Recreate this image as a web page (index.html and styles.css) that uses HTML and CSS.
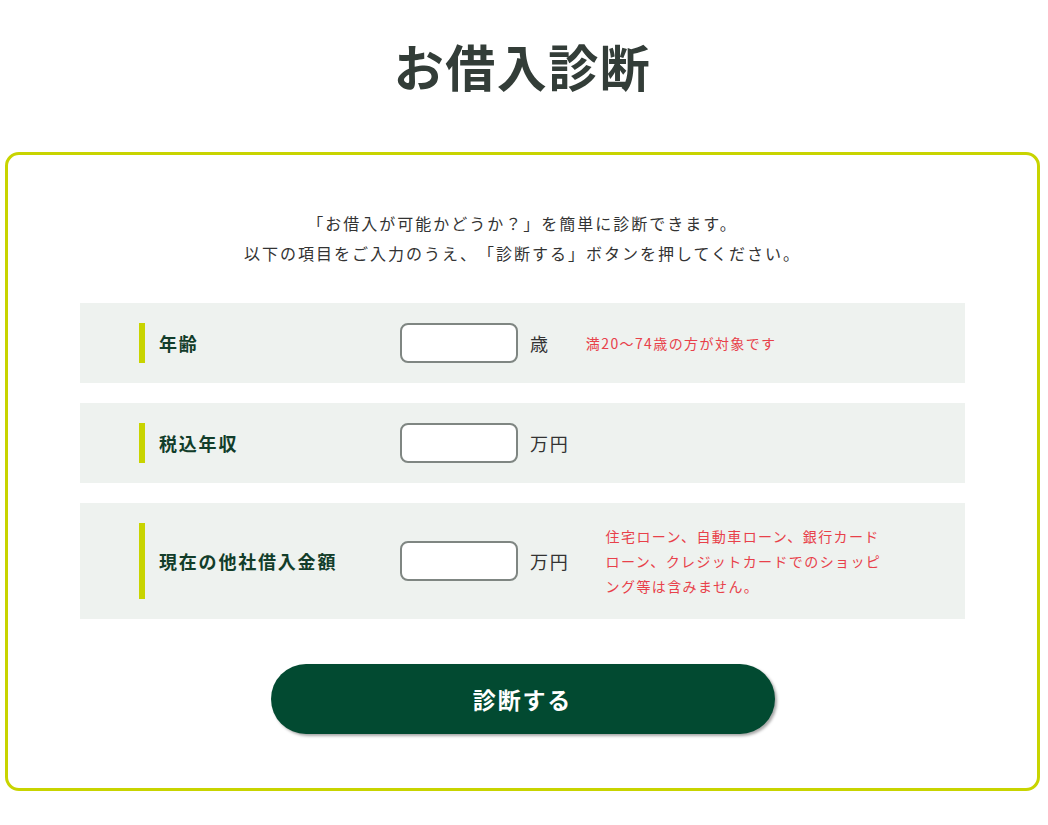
FILE: index.html
```html
<!DOCTYPE html>
<html lang="ja">
<head>
  <meta charset="UTF-8" />
  <meta name="viewport" content="width=device-width, initial-scale=1.0">
  <title>お借入診断</title>
  <link rel="stylesheet" href="styles.css">
</head>
<body>
  <h1 class="title">お借入診断</h1>
  <div class="card">
    <p class="intro">「お借入が可能かどうか？」を簡単に診断できます。<br>以下の項目をご入力のうえ、「診断する」ボタンを押してください。</p>

    <div class="row">
      <div class="label">年齢</div>
      <input type="text" class="field">
      <span class="unit">歳</span>
      <span class="note">満20〜74歳の方が対象です</span>
    </div>

    <div class="row">
      <div class="label">税込年収</div>
      <input type="text" class="field">
      <span class="unit">万円</span>
    </div>

    <div class="row">
      <div class="label">現在の他社借入金額</div>
      <input type="text" class="field">
      <span class="unit">万円</span>
      <span class="note note-wide">住宅ローン、自動車ローン、銀行カードローン、クレジットカードでのショッピング等は含みません。</span>
    </div>

    <div class="actions">
      <button class="submit">診断する</button>
    </div>
  </div>
</body>
</html>
```

FILE: styles.css
```css
body {
  font-family: "Noto Sans CJK JP", "Noto Sans", sans-serif;
  background: #fff;
  color: #333;
  margin: 0;
  padding: 0 8px 0 5px;
  text-spacing-trim: space-all;
}
.title {
  font-size: 50px;
  font-weight: bold;
  color: #333d38;
  text-align: center;
  letter-spacing: 0.03em;
  margin: 0;
  padding-top: 33px;
  line-height: 64px;
  height: 119px;
}
.card {
  border: 3px solid #c8d400;
  border-radius: 14px;
  padding: 53px 72px 54px;
}
.intro {
  text-align: center;
  font-size: 16px;
  line-height: 30px;
  letter-spacing: 0.125em;
  margin: 0 0 35px;
}
.row {
  display: flex;
  align-items: center;
  background: #eef2ef;
  padding: 20px 0 20px 59px;
  margin-bottom: 20px;
}
.label {
  align-self: stretch;
  display: flex;
  align-items: center;
  width: 241px;
  border-left: 6px solid #c8d400;
  padding-left: 14px;
  font-size: 18px;
  font-weight: bold;
  letter-spacing: 0.1em;
  color: #123d2a;
  min-height: 40px;
}
.field {
  box-sizing: border-box;
  width: 118px;
  height: 40px;
  border: 2px solid #7f8682;
  border-radius: 8px;
  background: #fff;
  margin: 0;
}
.unit {
  font-size: 18px;
  letter-spacing: 0.1em;
  margin-left: 12px;
}
.note {
  color: #e8414a;
  font-size: 14px;
  letter-spacing: 0.1em;
  line-height: 25px;
  margin-left: 36px;
}
.note-wide {
  width: 285px;
  padding: 1px 0 0;
}
.actions {
  display: flex;
  justify-content: center;
  padding-top: 25px;
}
.submit {
  width: 504px;
  height: 70px;
  border: none;
  border-radius: 35px;
  background: #024a31;
  color: #fff;
  font-family: inherit;
  font-size: 23px;
  font-weight: bold;
  letter-spacing: 0.08em;
  box-shadow: 2px 2px 3px rgba(0, 0, 0, 0.35);
  cursor: pointer;
}
```
